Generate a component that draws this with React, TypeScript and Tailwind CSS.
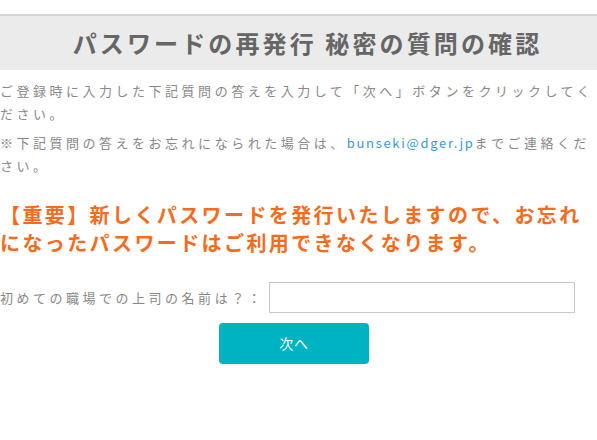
export default function App() {
  return (
    <div className="min-h-screen bg-white pt-[14px] font-['Noto_Sans_CJK_JP','Noto_Sans',sans-serif]">
      {/* Title band */}
      <h1 className="border-t-2 border-[#d4d4d4] bg-[#ebebeb] py-[9px] pl-[18px] text-center text-[24px] leading-[36px] font-bold tracking-[0.13em] text-[#666666]">
        パスワードの再発行 秘密の質問の確認
      </h1>

      {/* Guidance */}
      <div className="mt-[10px] text-[13px] leading-[22.5px] tracking-[0.27em] text-[#888888]">
        <p>ご登録時に入力した下記質問の答えを入力して「次へ」ボタンをクリックしてください。</p>
        <p className="mt-[7px]">
          ※下記質問の答えをお忘れになられた場合は、
          <a href="#" className="text-[#3b9ad2] tracking-[0.13em]">
            bunseki@dger.jp
          </a>
          までご連絡ください。
        </p>
      </div>

      <p className="mt-[24px] text-[20px] leading-[28px] font-bold tracking-[0.12em] text-[#f76b1c]">
        【重要】新しくパスワードを発行いたしますので、お忘れになったパスワードはご利用できなくなります。
      </p>

      {/* Question */}
      <form className="mt-[25px] flex flex-col">
        <div className="flex items-center">
          <label className="text-[13px] tracking-[0.27em] text-[#888888]">
            初めての職場での上司の名前は？：
          </label>
          <input
            type="text"
            className="ml-[5px] h-[31px] w-[306px] border border-[#c8c8c8] bg-white px-2 text-[13px] outline-none"
          />
        </div>
        <button
          type="button"
          className="mt-[10px] ml-[219px] h-[41px] w-[150px] rounded-[4px] bg-[#00b3c3] text-[14px] tracking-[0.05em] text-white"
        >
          次へ
        </button>
      </form>
    </div>
  )
}
